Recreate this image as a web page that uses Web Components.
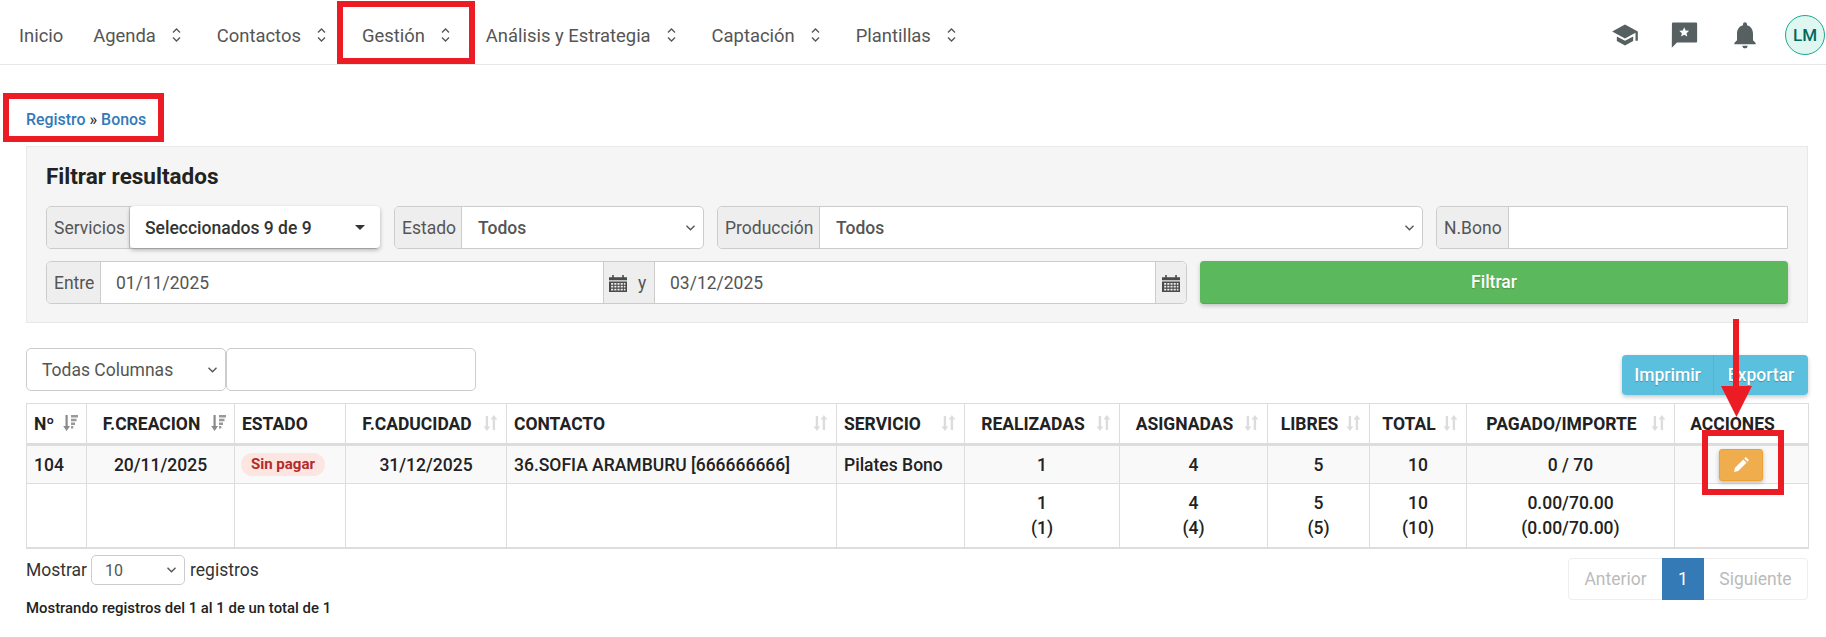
<!DOCTYPE html>
<html lang="es">
<head>
<meta charset="utf-8">
<title>Bonos</title>
<style>
    html, body { margin: 0; padding: 0; background: #fff; }
    body { font-family: Roboto, "Liberation Sans", sans-serif; font-size: 17.5px; color: #222; position: relative; height: 637px; overflow: hidden; }
    main { display: block; padding: 0 18px 0 26px; }
</style>
</head>
<body>
<top-nav>
    <nav-item plain>Inicio</nav-item>
    <nav-item>Agenda</nav-item>
    <nav-item>Contactos</nav-item>
    <nav-item>Gestión</nav-item>
    <nav-item>Análisis y Estrategia</nav-item>
    <nav-item>Captación</nav-item>
    <nav-item>Plantillas</nav-item>
</top-nav>
<main>
    <bread-crumb></bread-crumb>
    <filter-panel></filter-panel>
    <table-toolbar></table-toolbar>
    <bonos-table></bonos-table>
    <table-footer></table-footer>
</main>
<red-marks></red-marks>

<script>
const calendarIcon = `
    <svg width="18" height="18" viewBox="0 0 17 17" fill="#4a4a4a">
        <path d="M0 3h3V1h1.5v2h8V1H14v2h3v3H0z"/>
        <path fill-rule="evenodd" d="M0 7h17v10H0zM2 8.5v1.6h2V8.500zm3 0v1.600h2V8.500zm3 0v1.600h2V8.500zm3 0v1.600h2V8.500zm3 0v1.600h1.500V8.500zM2 11.200v1.600h2v-1.600zm3 0v1.600h2v-1.600zm3 0v1.600h2v-1.600zm3 0v1.600h2v-1.600zm3 0v1.600h1.500v-1.600zM2 13.900v1.600h2v-1.600zm3 0v1.600h2v-1.600zm3 0v1.600h2v-1.600zm3 0v1.600h2v-1.600zm3 0v1.600h1.500v-1.600z"/>
    </svg>`;

class TopNav extends HTMLElement {
    constructor() {
        super();
        this.attachShadow({ mode: 'open' });
    }

    connectedCallback() {
        this.shadowRoot.innerHTML = `
            <style>
                :host { display: flex; align-items: center; height: 58px; border-bottom: 1px solid #e7e7e7; padding: 6px 1px 0 19px; }
                .icons { margin-left: auto; display: flex; align-items: center; }
                .slot { width: 60px; display: flex; justify-content: center; }
                svg { display: block; fill: #566060; }
                .avatar { width: 38px; height: 38px; margin-left: 10px; border: 1px solid #1aa88f; border-radius: 50%; background: #e0f7f1; color: #00695c; font-size: 17px; font-weight: 500; display: flex; align-items: center; justify-content: center; }
            </style>
            <slot></slot>
            <div class="icons">
                <div class="slot"><svg width="28" height="28" viewBox="0 0 24 24"><path d="M5 13.180v4L12 21l7-3.820v-4L12 17l-7-3.820zM12 3L1 9l11 6 9-4.910V17h2V9L12 3z"/></svg></div>
                <div class="slot"><svg width="31" height="31" viewBox="1 0 24 24"><path d="M21 2H3.500C2.700 2 2.500 2.500 2.500 3.200L2.400 21.500 6.400 17.500H21c.7 0 1-.4 1-1V3c0-.6-.3-1-1-1z"/><path fill="#fff" d="M12 5.700l1.100 2.500 2.700.2-2 1.800.6 2.600-2.400-1.400-2.400 1.400.6-2.600-2-1.800 2.700-.2z"/></svg></div>
                <div class="slot"><svg width="32" height="32" viewBox="0 0 24 24"><path d="M12 22c1.100 0 2-.9 2-2h-4c0 1.100.89 2 2 2zm6-6v-5c0-3.070-1.640-5.640-4.500-6.320V4c0-.83-.67-1.500-1.500-1.500s-1.500.67-1.500 1.500v.68C7.630 5.360 6 7.920 6 11v5l-2 2v1h16v-1l-2-2z"/></svg></div>
                <div class="avatar">LM</div>
            </div>
        `;
    }
}
customElements.define('top-nav', TopNav);

class NavItem extends HTMLElement {
    constructor() {
        super();
        this.attachShadow({ mode: 'open' });
    }

    connectedCallback() {
        const plain = this.hasAttribute('plain');
        this.shadowRoot.innerHTML = `
            <style>
                :host { display: flex; align-items: center; font-size: 18.4px; color: #555; margin-right: ${plain ? 30 : 35.5}px; }
                svg { display: block; margin-left: 16.5px; }
            </style>
            <slot></slot>
            ${plain ? '' : `<svg width="9" height="14" viewBox="0 0 9 14" fill="none" stroke="#555" stroke-width="1.3"><path d="M1 4.500L4.500 1 8 4.500M1 9.500L4.500 13 8 9.500"/></svg>`}
        `;
    }
}
customElements.define('nav-item', NavItem);

class BreadCrumb extends HTMLElement {
    constructor() {
        super();
        this.attachShadow({ mode: 'open' });
    }

    connectedCallback() {
        this.shadowRoot.innerHTML = `
            <style>
                :host { display: block; padding: 45px 0 16px; line-height: 20px; font-size: 15.9px; font-weight: 500; color: #333; }
                a { color: #337ab7; text-decoration: none; }
            </style>
            <a href="#">Registro</a> » <a href="#">Bonos</a>
        `;
    }
}
customElements.define('bread-crumb', BreadCrumb);

class InputGroup extends HTMLElement {
    constructor() {
        super();
        this.attachShadow({ mode: 'open' });
    }

    connectedCallback() {
        this.shadowRoot.innerHTML = `
            <style>
                :host { display: flex; height: 43px; box-sizing: border-box; border: 1px solid #ccc; border-radius: 5px; background: #fff; color: #555; }
                ::slotted(*) { display: flex; align-items: center; box-sizing: border-box; }
            </style>
            <slot></slot>
        `;
    }
}
customElements.define('input-group', InputGroup);

// addon on the left or middle of a group
class GroupAddon extends HTMLElement {
    constructor() {
        super();
        this.attachShadow({ mode: 'open' });
    }

    connectedCallback() {
        this.shadowRoot.innerHTML = `
            <style>
                :host { display: flex; align-items: center; flex: none; background: #eee; color: #555; padding: 0 7px; border-right: 1px solid #ccc; border-radius: 4px 0 0 4px; white-space: nowrap; }
                :host([end]) { border-right: 0; border-left: 1px solid #ccc; border-radius: 0 4px 4px 0; justify-content: center; padding: 0; }
                :host([mid]) { border-radius: 0; border-left: 1px solid #ccc; padding: 0 5px; }
            </style>
            <slot></slot>
        `;
    }
}
customElements.define('group-addon', GroupAddon);

class SelectField extends HTMLElement {
    constructor() {
        super();
        this.attachShadow({ mode: 'open' });
    }

    connectedCallback() {
        this.shadowRoot.innerHTML = `
            <style>
                :host { display: flex; align-items: center; flex: 1; padding: 0 8px 0 16px; font-weight: 500; color: #555; }
                span { flex: 1; }
                svg { display: block; }
            </style>
            <span><slot></slot></span>
            <svg width="9" height="6" viewBox="0 0 9 6" fill="none" stroke="#555" stroke-width="1.400"><path d="M.5.700L4.500 4.700 8.500.700"/></svg>
        `;
    }
}
customElements.define('select-field', SelectField);

class TextField extends HTMLElement {
    constructor() {
        super();
        this.attachShadow({ mode: 'open' });
    }

    connectedCallback() {
        this.shadowRoot.innerHTML = `
            <style>
                :host { display: flex; align-items: center; flex: 1; padding: 0 15px; color: #555; }
            </style>
            <slot></slot>
        `;
    }
}
customElements.define('text-field', TextField);

class ServiceDropdown extends HTMLElement {
    constructor() {
        super();
        this.attachShadow({ mode: 'open' });
    }

    connectedCallback() {
        this.shadowRoot.innerHTML = `
            <style>
                :host { display: flex; align-items: center; flex: 1; padding: 2px 15px 0 15px; margin: -1px -1px 0 0; height: 42px; background: #fff; color: #333; font-weight: 500; border-radius: 4px; box-shadow: 0 2px 4px rgba(0,0,0,.28); position: relative; }
                span { flex: 1; }
                i { width: 0; height: 0; border: 5px solid transparent; border-top-color: #333; border-bottom: 0; margin-top: -2px; }
            </style>
            <span><slot></slot></span><i></i>
        `;
    }
}
customElements.define('service-dropdown', ServiceDropdown);

class FilterPanel extends HTMLElement {
    constructor() {
        super();
        this.attachShadow({ mode: 'open' });
    }

    connectedCallback() {
        this.shadowRoot.innerHTML = `
            <style>
                :host { display: block; box-sizing: border-box; height: 177px; padding: 19px; background: #f5f5f5; border: 1px solid #e8e8e8; }
                h2 { margin: 0 0 19px; font-size: 22.5px; line-height: 21px; font-weight: 700; color: #222; }
                .row1 { display: grid; grid-template-columns: 334px 311px 706px 1fr; column-gap: 13px; margin-bottom: 12px; }
                .row2 { display: grid; grid-template-columns: 1fr 588px; column-gap: 13px; }
                button { height: 43px; border: 0; border-bottom: 1px solid #4cae4c; border-radius: 4px; background: #5cb85c; color: #fff; font: 500 17.500px Roboto, "Liberation Sans", sans-serif; text-shadow: 0 1px 1px rgba(0,0,0,.2); box-shadow: 0 2px 4px rgba(0,0,0,.2); padding: 0; }
            </style>
            <h2>Filtrar resultados</h2>
            <div class="row1">
                <input-group>
                    <group-addon style="width:83px">Servicios</group-addon>
                    <service-dropdown>Seleccionados 9 de 9</service-dropdown>
                </input-group>
                <input-group style="margin-left:1px">
                    <group-addon style="width:67px">Estado</group-addon>
                    <select-field>Todos</select-field>
                </input-group>
                <input-group>
                    <group-addon style="width:102px">Producción</group-addon>
                    <select-field>Todos</select-field>
                </input-group>
                <input-group style="border-radius:5px 0 0 5px">
                    <group-addon style="width:72px">N.Bono</group-addon>
                    <text-field></text-field>
                </input-group>
            </div>
            <div class="row2">
                <input-group>
                    <group-addon style="width:54px">Entre</group-addon>
                    <text-field style="width:502px;flex:none">01/11/2025</text-field>
                    <group-addon mid style="width:52px">${calendarIcon}<span style="margin-left:11px">y</span></group-addon>
                    <text-field>03/12/2025</text-field>
                    <group-addon end style="width:31px">${calendarIcon}</group-addon>
                </input-group>
                <button>Filtrar</button>
            </div>
        `;
    }
}
customElements.define('filter-panel', FilterPanel);

class TableToolbar extends HTMLElement {
    constructor() {
        super();
        this.attachShadow({ mode: 'open' });
    }

    connectedCallback() {
        this.shadowRoot.innerHTML = `
            <style>
                :host { display: flex; justify-content: space-between; align-items: flex-start; padding-top: 25px; height: 55px; }
                .search { display: flex; }
                input-group { border-radius: 5px; }
                .cols { width: 200px; }
                .free { width: 250px; }
                .buttons { display: flex; margin-top: 7px; border-radius: 4px; box-shadow: 0 2px 4px rgba(0,0,0,.22); }
                button { height: 40px; border: 0; background: #5bc0de; color: #fff; font: 500 17.500px Roboto, "Liberation Sans", sans-serif; text-shadow: 0 1px 1px rgba(0,0,0,.25); padding: 0; }
                .print { width: 92px; border-radius: 4px 0 0 4px; border-right: 1px solid #46b8da; }
                .export { width: 94px; border-radius: 0 4px 4px 0; }
            </style>
            <div class="search">
                <input-group class="cols"><select-field style="font-weight:400;padding-left:15px">Todas Columnas</select-field></input-group>
                <input-group class="free"><text-field></text-field></input-group>
            </div>
            <div class="buttons">
                <button class="print">Imprimir</button>
                <button class="export">Exportar</button>
            </div>
        `;
    }
}
customElements.define('table-toolbar', TableToolbar);

class SortIcon extends HTMLElement {
    constructor() {
        super();
        this.attachShadow({ mode: 'open' });
    }

    connectedCallback() {
        const active = this.hasAttribute('active');
        this.shadowRoot.innerHTML = `
            <style>
                :host { position: absolute; right: 8px; top: 11px; width: 15px; height: 16px; }
                svg { display: block; }
            </style>
            ${active
                ? `<svg width="15" height="16" viewBox="0 0 15 16" fill="#8a8a8a"><path d="M2.500 0h2.200v11H7L3.600 16 .2 11h2.300z"/><path fill="#9a9a9a" d="M8 0h7v2.500H8zM8 3.700h5.500v2.500H8zM8 7.400h4v2.500H8zM8 11.100h2.300v2.500H8z"/></svg>`
                : `<svg width="15" height="16" viewBox="0 0 15 16" fill="#dcdcdc"><path d="M2.700 1h2.400v10.500h2.200L3.900 16 .5 11.500h2.200z"/><path d="M9.700 15h2.400V4.500h2.200L10.900 0 7.500 4.500h2.200z"/></svg>`}
        `;
    }
}
customElements.define('sort-icon', SortIcon);

const columns = [
    { title: 'Nº', width: 60, left: true, sort: 'active' },
    { title: 'F.CREACION', width: 148, sort: 'active' },
    { title: 'ESTADO', width: 111, left: true },
    { title: 'F.CADUCIDAD', width: 161, sort: 'idle' },
    { title: 'CONTACTO', width: 330, left: true, sort: 'idle' },
    { title: 'SERVICIO', width: 128, left: true, sort: 'idle' },
    { title: 'REALIZADAS', width: 155, sort: 'idle' },
    { title: 'ASIGNADAS', width: 148, sort: 'idle' },
    { title: 'LIBRES', width: 102, sort: 'idle' },
    { title: 'TOTAL', width: 97, sort: 'idle' },
    { title: 'PAGADO/IMPORTE', width: 208, sort: 'idle' },
    { title: 'ACCIONES', width: 134, sort: 'none' }
];

const pencilButton = `<span class="edit"><svg width="16" height="16" viewBox="0 0 16 16" fill="#fff"><path d="M1 15l1-4.200L10.300 2.500l3.200 3.200L5.200 14z"/><path d="M11.300 1.500l1-1c.3-.3.7-.3 1 0l2.200 2.200c.3.3.3.700 0 1l-1 1z"/></svg></span>`;

const row = ['104', '20/11/2025', '<span class="badge">Sin pagar</span>', '31/12/2025', '36.SOFIA ARAMBURU [666666666]', 'Pilates Bono', '1', '4', '5', '10', '0 / 70', pencilButton];
const totals = ['', '', '', '', '', '', '1<br>(1)', '4<br>(4)', '5<br>(5)', '10<br>(10)', '0.00/70.00<br>(0.00/70.00)', ''];

class BonosTable extends HTMLElement {
    constructor() {
        super();
        this.attachShadow({ mode: 'open' });
    }

    connectedCallback() {
        const sortMark = col => {
            if (col.sort === 'active') return '<sort-icon active></sort-icon>';
            return col.sort === 'idle' ? '<sort-icon></sort-icon>' : '';
        };
        const head = columns.map(col => `
            <th class="${col.left ? 'left' : ''} ${col.sort ? 'sorted' : ''}">${col.title}${sortMark(col)}</th>`).join('');
        const cells = values => values.map((value, i) => `<td class="${columns[i].left ? 'left' : ''}">${value}</td>`).join('');

        this.shadowRoot.innerHTML = `
            <style>
                :host { display: block; }
                table { border-collapse: collapse; table-layout: fixed; width: 1782px; color: #222; }
                th, td { border: 1px solid #ddd; padding: 0 7px; text-align: center; font-size: 17.500px; font-weight: 500; }
                th { position: relative; height: 39px; font-weight: 700; border-bottom: 3px solid #ddd; white-space: nowrap; }
                th.sorted { padding-right: 25px; }
                .left { text-align: left; }
                tbody tr:first-child td { height: 37px; background: #f9f9f9; white-space: nowrap; }
                tbody tr:last-child td { height: 63px; line-height: 25px; border-bottom: 2px solid #ddd; }
                .badge { display: inline-block; margin: 0 0 0 -1px; padding: 0 10px; height: 23px; line-height: 23px; border-radius: 12px; background: #fde5e2; color: #b42b2b; font-size: 15px; font-weight: 700; vertical-align: 4px; }
                .edit { display: inline-flex; align-items: center; justify-content: center; box-sizing: border-box; width: 44px; height: 32px; margin-left: -2px; background: #f0ad4e; border: 1px solid #eea236; border-radius: 3px; box-shadow: 0 2px 4px rgba(0,0,0,.25); vertical-align: middle; }
            </style>
            <table>
                <colgroup>${columns.map(col => `<col style="width:${col.width}px">`).join('')}</colgroup>
                <thead><tr>${head}</tr></thead>
                <tbody>
                    <tr>${cells(row)}</tr>
                    <tr>${cells(totals)}</tr>
                </tbody>
            </table>
        `;
    }
}
customElements.define('bonos-table', BonosTable);

class TableFooter extends HTMLElement {
    constructor() {
        super();
        this.attachShadow({ mode: 'open' });
    }

    connectedCallback() {
        this.shadowRoot.innerHTML = `
            <style>
                :host { display: flex; justify-content: space-between; align-items: flex-start; padding-top: 6px; }
                .length { display: flex; align-items: center; height: 30px; color: #333; }
                input-group { width: 94px; height: 30px; margin: 0 5px 0 4px; font-size: 16px; font-weight: 400; }
                input-group select-field { font-weight: 400; padding-left: 13px; }
                .info { margin-top: 14px; font-size: 14.900px; font-weight: 500; line-height: 18px; color: #222; }
                .pager { display: flex; height: 42px; margin-top: 3px; box-sizing: border-box; border: 1px solid #eee; border-radius: 4px; color: #bbb; }
                .pager span { display: flex; align-items: center; justify-content: center; }
                .prev { width: 93px; }
                .current { width: 42px; margin: -1px 0; background: #337ab7; color: #fff; }
                .next { width: 103px; }
            </style>
            <div>
                <div class="length">Mostrar
                    <input-group><select-field>10</select-field></input-group>
                    registros</div>
                <div class="info">Mostrando registros del 1 al 1 de un total de 1</div>
            </div>
            <div class="pager">
                <span class="prev">Anterior</span><span class="current">1</span><span class="next">Siguiente</span>
            </div>
        `;
    }
}
customElements.define('table-footer', TableFooter);

// red annotations drawn on top of the screenshot
class RedMarks extends HTMLElement {
    constructor() {
        super();
        this.attachShadow({ mode: 'open' });
    }

    connectedCallback() {
        this.shadowRoot.innerHTML = `
            <style>
                :host { position: absolute; left: 0; top: 0; width: 100%; height: 100%; pointer-events: none; }
                div { position: absolute; box-sizing: border-box; border: 6px solid #ec1c24; }
                .nav { left: 337px; top: 1px; width: 138px; height: 63px; }
                .crumb { left: 3px; top: 93px; width: 161px; height: 49px; }
                .edit { left: 1702px; top: 430px; width: 82px; height: 65px; }
                svg { position: absolute; left: 1721px; top: 319px; }
            </style>
            <div class="nav"></div>
            <div class="crumb"></div>
            <div class="edit"></div>
            <svg width="31" height="98" viewBox="0 0 31 98" fill="#ec1c24"><path d="M12 0h6v67h13L15.500 98 0 67h12z"/></svg>
        `;
    }
}
customElements.define('red-marks', RedMarks);
</script>
</body>
</html>
